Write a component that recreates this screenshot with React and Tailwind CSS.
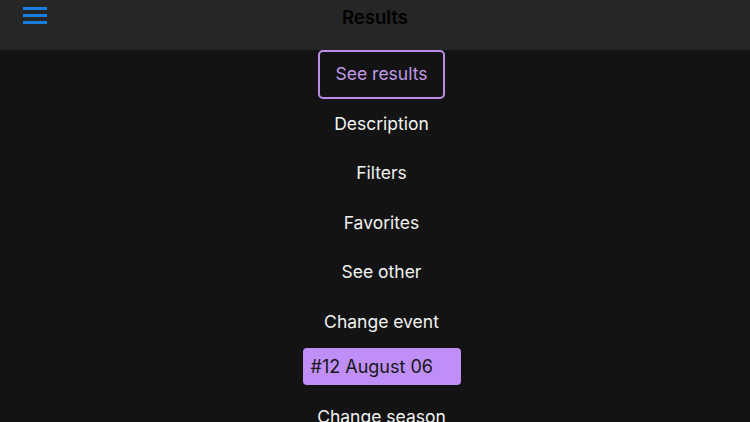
export default function App() {
  const items = ['Description', 'Filters', 'Favorites', 'See other', 'Change event']

  return (
    <div className="w-[750px] h-[422px] overflow-hidden bg-[#131313] font-['Inter',sans-serif]">
      {/* Header */}
      <div className="relative h-[50px] bg-[#262626] flex justify-center">
        <button className="absolute left-[23px] top-[7px] w-[24px] h-[17px] flex flex-col justify-between">
          <span className="block h-[3px] w-full bg-[#1a7fe0]" />
          <span className="block h-[3px] w-full bg-[#1a7fe0]" />
          <span className="block h-[3px] w-full bg-[#1a7fe0]" />
        </button>
        <h1 className="mt-[5px] text-[18.5px] leading-[24px] font-semibold text-black">Results</h1>
      </div>

      {/* Menu */}
      <div className="flex flex-col items-center pl-[13px]">
        <button className="w-[127px] h-[49px] border-2 border-[#b98ce8] rounded-[5px] text-[17.5px] text-[#c29ae9]">
          See results
        </button>
        {items.map((label) => (
          <div key={label} className="h-[49.5px] flex items-center text-[17.5px] text-[#f2f2f2]">
            {label}
          </div>
        ))}
        <div className="w-[158px] h-[37px] mt-[1px] rounded-[4px] bg-[#bf8ef7] flex items-center px-[8px] text-[18px] text-[#161616]">
          #12 August 06
        </div>
        <div className="h-[50px] mt-[8px] flex items-center text-[17.5px] text-[#f2f2f2]">
          Change season
        </div>
      </div>
    </div>
  )
}
